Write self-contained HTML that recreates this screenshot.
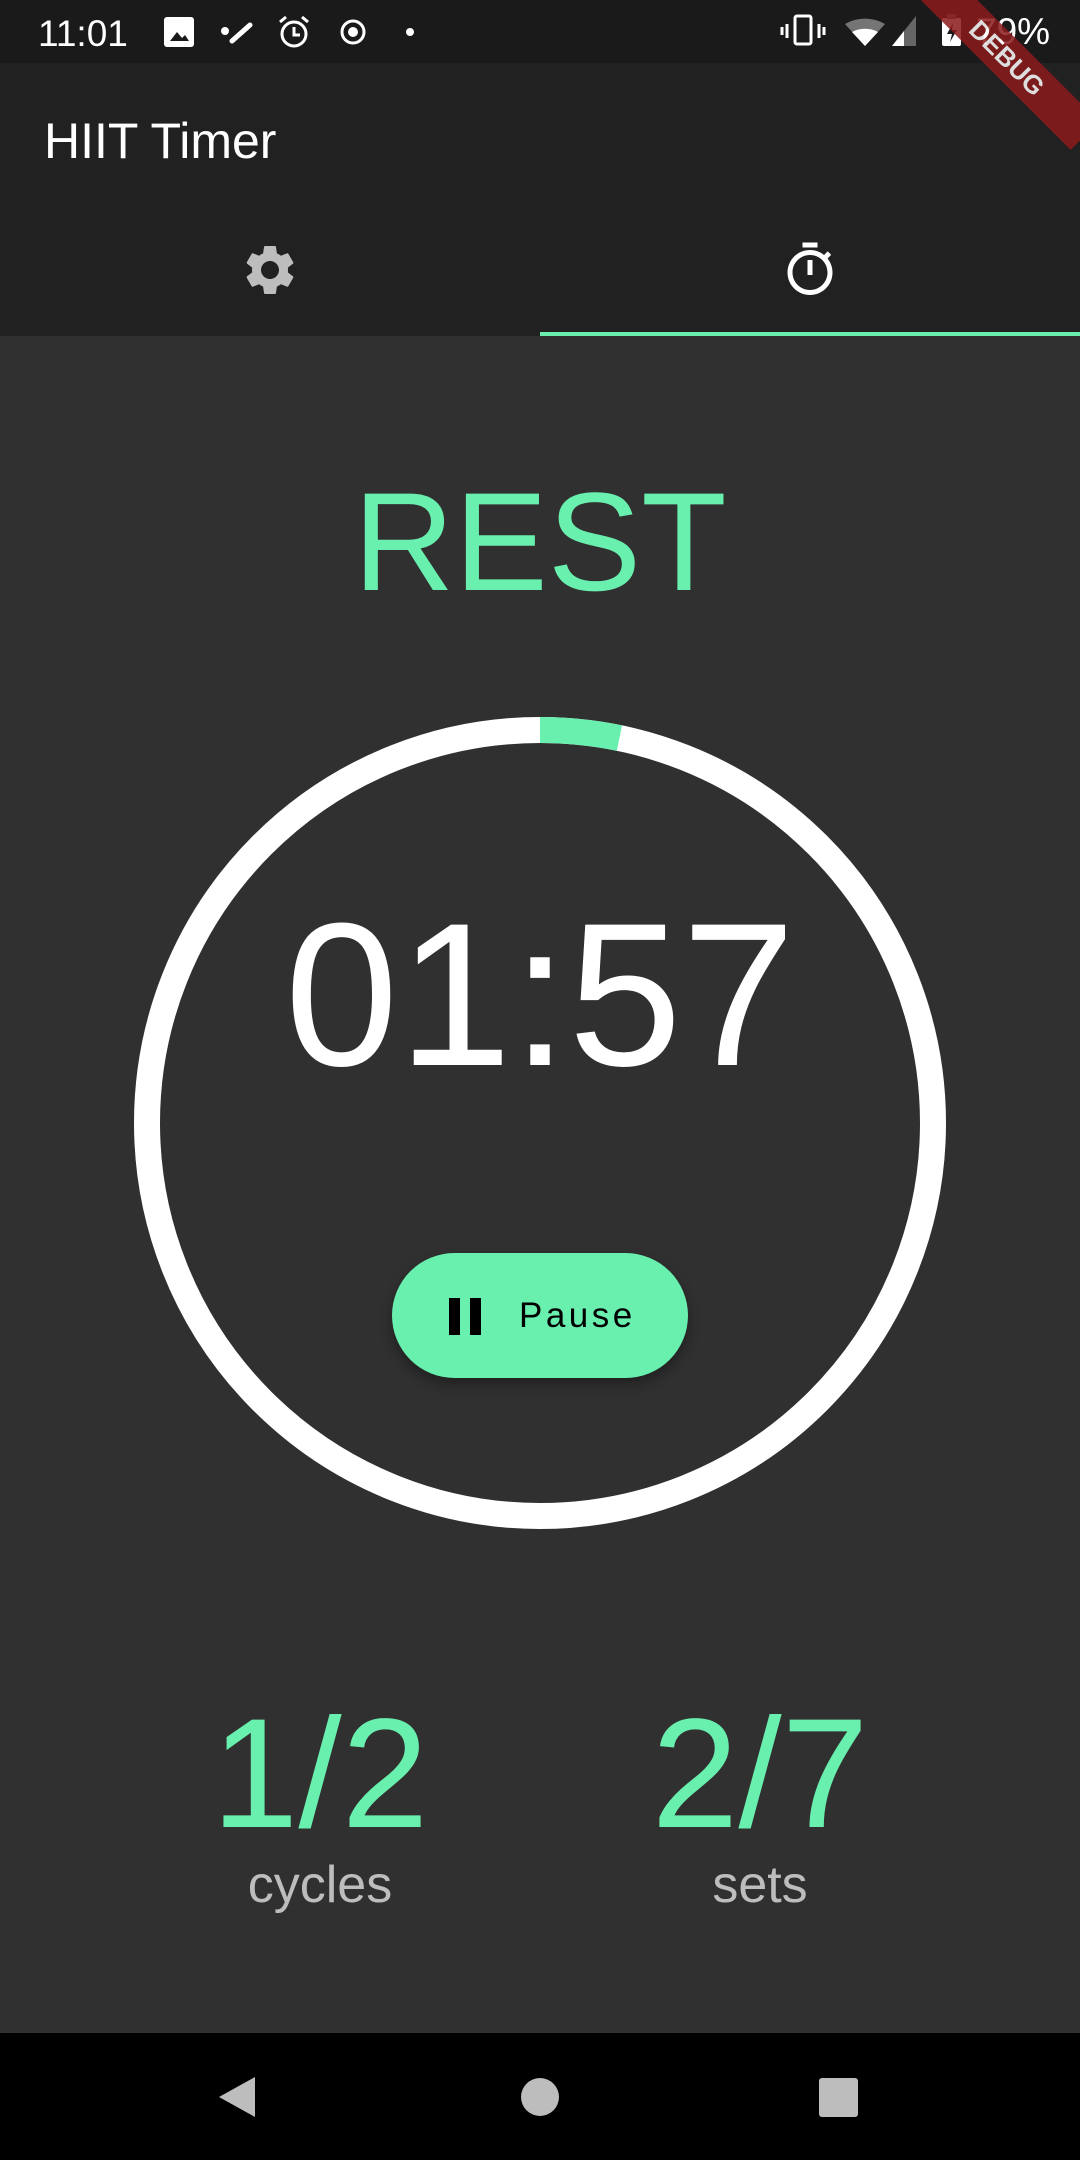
<!DOCTYPE html>
<html><head><meta charset="utf-8"><style>
*{margin:0;padding:0;box-sizing:border-box}
body{width:1080px;height:2160px;background:#303030;position:relative;overflow:hidden;font-family:"Liberation Sans",sans-serif}
.a{position:absolute;line-height:1;white-space:nowrap}
.c{text-align:center}
</style></head><body>
<div class="a" style="left:0;top:0;width:1080px;height:63px;background:#1a1a1a"></div>
<div class="a" style="left:0;top:63px;width:1080px;height:273px;background:#212121"></div>
<div class="a" style="left:540px;top:332px;width:540px;height:4px;background:#69f0ae"></div>
<div class="a" style="left:0;top:2033px;width:1080px;height:127px;background:#000"></div>

<div class="a" style="left:38px;top:15px;font-size:37px;color:#fff">11:01</div>
<svg class="a" style="left:160px;top:14px" width="300" height="40" viewBox="0 0 300 40">
 <rect x="4" y="3" width="30" height="30" rx="3" fill="#fff"/><path d="M10 27 L17 18 L22 24 L25 21 L29 27Z" fill="#1a1a1a"/>
 <circle cx="65" cy="17" r="4" fill="#fff"/><path d="M72 27 L90 11" stroke="#fff" stroke-width="5" stroke-linecap="round"/>
 <circle cx="134" cy="20" r="12" fill="none" stroke="#fff" stroke-width="3"/><path d="M134 13 V21 H140" stroke="#fff" stroke-width="3" fill="none"/><path d="M120 8 L126 3 M148 8 L142 3" stroke="#fff" stroke-width="3"/>
 <circle cx="193" cy="18" r="11" fill="none" stroke="#fff" stroke-width="3"/><circle cx="193" cy="18" r="5" fill="#fff"/>
 <circle cx="250" cy="18" r="4" fill="#fff"/>
</svg>
<svg class="a" style="left:780px;top:12px" width="220" height="40" viewBox="0 0 220 40">
 <rect x="15" y="4" width="16" height="28" rx="2" fill="none" stroke="#fff" stroke-width="3"/><path d="M7 12V26M2 15V23M39 12V26M44 15V23" stroke="#fff" stroke-width="3"/>
 <path d="M65 12 A40 40 0 0 1 105 12 L85 34Z" fill="#fff" opacity="0.4"/><path d="M72 20 A28 28 0 0 1 98 20 L85 34Z" fill="#fff"/>
 <path d="M112 34 L136 4 V34Z" fill="#666"/><path d="M112 34 L124 19 V34Z" fill="#fff"/>
 <rect x="162" y="6" width="19" height="28" rx="2" fill="#fff"/><rect x="167" y="2" width="9" height="5" fill="#777"/><path d="M173 11 L167 22 H172 L170 30 L177 18 H172Z" fill="#1a1a1a"/>
</svg>
<div class="a" style="left:976px;top:13px;font-size:37px;color:#fff">79%</div>
<div class="a" style="left:897px;top:38px;width:220px;height:40px;background:#8b1a1a;opacity:0.85;transform:rotate(45deg);color:#fff;font-weight:bold;font-size:26px;text-align:center;line-height:40px">DEBUG</div>

<div class="a" style="left:44px;top:116px;font-size:50px;color:#fff;font-weight:500">HIIT Timer</div>

<svg class="a" style="left:240px;top:240px" width="60" height="60" viewBox="0 0 24 24"><path fill="#bdbdbd" d="M19.14 12.94c.04-.3.06-.61.06-.94 0-.32-.02-.64-.07-.94l2.030-1.58a.49.49 0 0 0 .12-.61l-1.92-3.32a.488.488 0 0 0-.59-.22l-2.39.96c-.5-.38-1.03-.7-1.62-.94l-.36-2.54a.484.484 0 0 0-.48-.41h-3.84c-.24 0-.43.17-.47.41l-.36 2.54c-.59.24-1.13.57-1.62.94l-2.39-.96c-.22-.08-.47 0-.59.22L2.74 8.87c-.12.21-.08.47.12.61l2.03 1.58c-.05.3-.09.63-.09.94s.02.64.07.94l-2.03 1.58a.49.49 0 0 0-.12.61l1.92 3.32c.12.22.37.29.59.22l2.39-.96c.5.38 1.03.7 1.62.94l.36 2.54c.05.24.24.41.48.41h3.84c.24 0 .44-.17.47-.41l.36-2.54c.59-.24 1.130-.56 1.62-.94l2.39.96c.22.08.47 0 .59-.22l1.92-3.32c.12-.22.07-.47-.12-.61l-2.01-1.58zM12 15.6c-1.98 0-3.6-1.62-3.6-3.6s1.62-3.6 3.6-3.6 3.6 1.62 3.6 3.6-1.62 3.6-3.6 3.6z"/></svg>
<svg class="a" style="left:780px;top:240px" width="60" height="60" viewBox="0 0 24 24"><path fill="#fff" d="M15 1H9v2h6V1zm-4 13h2V8h-2v6zm8.03-6.61l1.42-1.420c-.43-.51-.9-.99-1.410-1.41l-1.42 1.42A8.962 8.962 0 0 0 12 4c-4.97 0-9 4.03-9 9s4.02 9 9 9 9-4.03 9-9c0-2.12-.74-4.07-1.97-5.61zM12 20c-3.87 0-7-3.13-7-7s3.13-7 7-7 7 3.13 7 7-3.13 7-7 7z"/></svg>

<div class="a c" style="left:0;width:1080px;top:472px;font-size:140px;color:#69f0ae">REST</div>

<svg class="a" style="left:0;top:0" width="1080" height="2160">
 <circle cx="540" cy="1123" r="393" fill="none" stroke="#fff" stroke-width="26"/>
 <circle cx="540" cy="1123" r="393" fill="none" stroke="#69f0ae" stroke-width="26" stroke-dasharray="80 3000" transform="rotate(-90 540 1123)"/>
</svg>
<div class="a c" style="left:0;width:1080px;top:893px;font-size:204px;color:#fff">01:57</div>

<div class="a" style="left:392px;top:1253px;width:296px;height:125px;border-radius:63px;background:#69f0ae;box-shadow:0 6px 12px rgba(0,0,0,0.35)"></div>
<div class="a" style="left:449px;top:1298px;width:11px;height:37px;background:#000"></div>
<div class="a" style="left:470px;top:1298px;width:11px;height:37px;background:#000"></div>
<div class="a" style="left:519px;top:1298px;font-size:35px;letter-spacing:3.5px;color:#000">Pause</div>

<div class="a c" style="left:120px;width:400px;top:1696px;font-size:156px;color:#69f0ae">1/2</div>
<div class="a c" style="left:560px;width:400px;top:1696px;font-size:156px;color:#69f0ae">2/7</div>
<div class="a c" style="left:120px;width:400px;top:1859px;font-size:52px;color:#bdbdbd">cycles</div>
<div class="a c" style="left:560px;width:400px;top:1859px;font-size:52px;color:#bdbdbd">sets</div>

<svg class="a" style="left:0;top:2033px" width="1080" height="127">
 <path d="M255 44 V84 L219 64Z" fill="#bdbdbd"/>
 <circle cx="540" cy="64" r="19" fill="#bdbdbd"/>
 <rect x="819" y="45" width="39" height="39" rx="3" fill="#bdbdbd"/>
</svg>
</body></html>
